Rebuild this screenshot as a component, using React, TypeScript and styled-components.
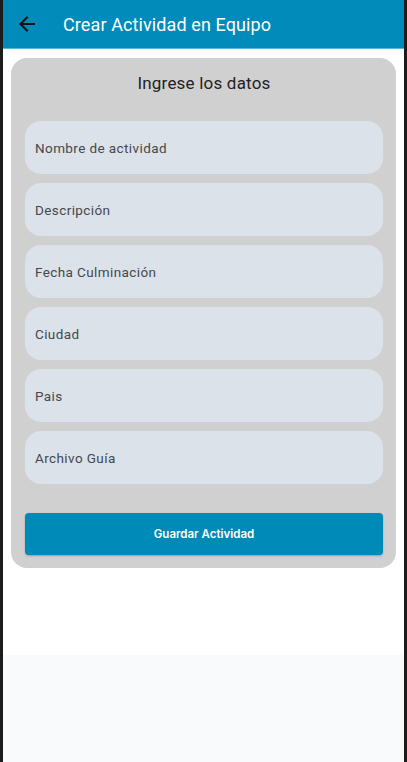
import React from "react";
import styled, { createGlobalStyle } from "styled-components";

const Global = createGlobalStyle`
  html, body { margin: 0; padding: 0; background: #1c1c1c; }
  body { font-family: Roboto, "Noto Sans", sans-serif; }
  * { box-sizing: border-box; }
`;

const Frame = styled.div`
  width: 407px;
  height: 762px;
  background: #1c1c1c;
  padding: 0 3px;
  display: flex;
`;

const Screen = styled.div`
  flex: 1;
  display: flex;
  flex-direction: column;
  background: #f8fafc;
`;

const AppBar = styled.header`
  height: 49px;
  background: #008bba;
  border-bottom: 1px solid #5ab4d6;
  display: flex;
  align-items: center;
  padding: 0 0 0 12px;
  gap: 24px;
`;

const BackButton = styled.button`
  width: 24px;
  height: 24px;
  padding: 0;
  border: none;
  background: transparent;
  display: flex;
  align-items: center;
  justify-content: center;
  color: #111;
`;

const Title = styled.h1`
  margin: 0;
  font-size: 18px;
  font-weight: 400;
  color: #ffffff;
  letter-spacing: 0.1px;
`;

const Body = styled.main`
  background: #ffffff;
  padding: 9px 8px 87px 8px;
`;

const Card = styled.section`
  background: #d0d0d0;
  border-radius: 16px;
  padding: 13px 13px 13px 14px;
  display: flex;
  flex-direction: column;
`;

const CardTitle = styled.h2`
  margin: 0 0 26px 0;
  text-align: center;
  font-size: 17px;
  font-weight: 400;
  color: #222;
  line-height: 24px;
  letter-spacing: 0.2px;
`;

const Fields = styled.div`
  display: flex;
  flex-direction: column;
  gap: 9px;
`;

const Field = styled.div`
  height: 53px;
  border-radius: 16px;
  background: #dce2e9;
  display: flex;
  align-items: center;
  padding: 0 10px;
  font-size: 13.5px;
  color: #45484d;
  letter-spacing: 0.4px;
`;

const SaveButton = styled.button`
  margin-top: 29px;
  height: 42px;
  border: none;
  border-radius: 4px;
  background: #008ab8;
  color: #ffffff;
  font-family: Inter, Roboto, sans-serif;
  font-size: 11.5px;
  font-weight: 600;
  box-shadow: 0 1px 2px rgba(0, 0, 0, 0.25);
`;

const fields = [
  "Nombre de actividad",
  "Descripción",
  "Fecha Culminación",
  "Ciudad",
  "Pais",
  "Archivo Guía",
];

export default function App() {
  return (
    <>
      <Global />
      <Frame>
        <Screen>
          <AppBar>
            <BackButton aria-label="Volver">
              <svg width="24" height="24" viewBox="0 0 24 24">
                <path
                  d="M20 11H7.83l5.59-5.59L12 4l-8 8 8 8 1.41-1.41L7.83 13H20v-2z"
                  fill="currentColor"
                />
              </svg>
            </BackButton>
            <Title>Crear Actividad en Equipo</Title>
          </AppBar>
          <Body>
            <Card>
              <CardTitle>Ingrese los datos</CardTitle>
              <Fields>
                {fields.map((f) => (
                  <Field key={f}>{f}</Field>
                ))}
              </Fields>
              <SaveButton>Guardar Actividad</SaveButton>
            </Card>
          </Body>
        </Screen>
      </Frame>
    </>
  );
}
